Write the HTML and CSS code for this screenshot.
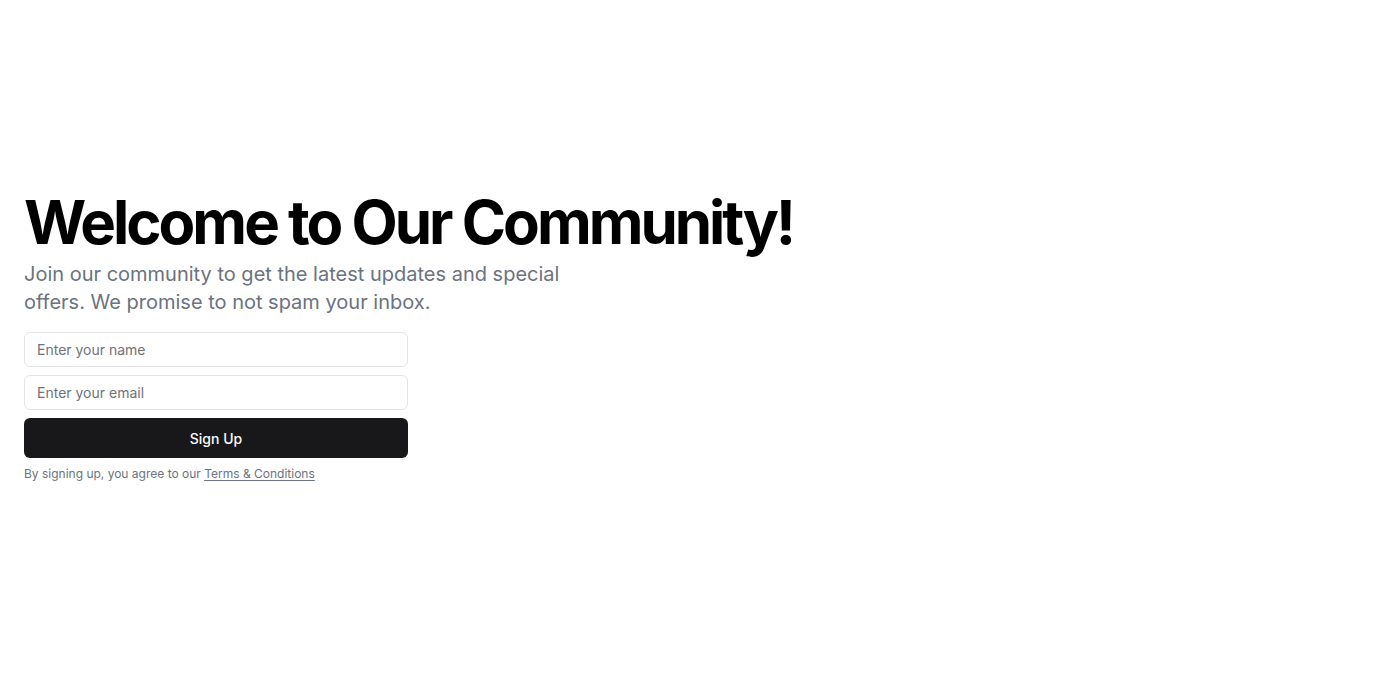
FILE: index.html
```html
<!DOCTYPE html>
<html lang="en">
<head>
<meta charset="utf-8">
<title>Welcome</title>
<link rel="stylesheet" href="styles.css">
</head>
<body>
<main class="page">
  <section class="hero">
    <div class="intro">
      <h1 class="title">Welcome to Our Community!</h1>
      <p class="lead">Join our community to get the latest updates and special offers. We promise to not spam your inbox.</p>
    </div>
    <div class="signup">
      <form class="form">
        <input class="field" type="text" placeholder="Enter your name">
        <input class="field" type="email" placeholder="Enter your email">
        <button class="btn" type="submit">Sign Up</button>
      </form>
      <p class="terms">By signing up, you agree to our <a href="#" class="terms-link">Terms &amp; Conditions</a></p>
    </div>
  </section>
</main>
</body>
</html>
```
FILE: styles.css
```css
* { box-sizing: border-box; }
html, body { margin: 0; padding: 0; }
body {
  font-family: Inter, "Noto Sans", sans-serif;
  color: #09090b;
  background: #fff;
}
.page {
  min-height: 674px;
  display: flex;
  align-items: center;
  padding: 0 24px;
}
.hero {
  display: flex;
  flex-direction: column;
  gap: 16px;
}
.intro {
  display: flex;
  flex-direction: column;
  gap: 8px;
}
.title {
  margin: 0;
  font-size: 60px;
  line-height: 1;
  font-weight: 700;
  letter-spacing: -0.05em;
  color: #000;
}
.lead {
  margin: 0;
  max-width: 600px;
  font-size: 20px;
  line-height: 28px;
  color: #6b7280;
}
.signup {
  width: 384px;
  display: flex;
  flex-direction: column;
  gap: 8px;
}
.form {
  display: flex;
  flex-direction: column;
  gap: 8px;
}
.field {
  height: 35px;
  width: 100%;
  border: 1px solid #e4e4e7;
  border-radius: 6px;
  padding: 0 12px;
  font-family: inherit;
  font-size: 14px;
  color: #09090b;
  background: #fff;
}
.field::placeholder { color: #71717a; }
.btn {
  height: 40px;
  width: 100%;
  border: none;
  border-radius: 6px;
  background: #18181b;
  color: #fafafa;
  font-family: inherit;
  font-size: 14px;
  font-weight: 500;
}
.terms {
  margin: 0;
  font-size: 12px;
  line-height: 16px;
  color: #6b7280;
}
.terms-link {
  color: #6b7280;
  text-decoration: underline;
  text-underline-offset: 2px;
}
```
